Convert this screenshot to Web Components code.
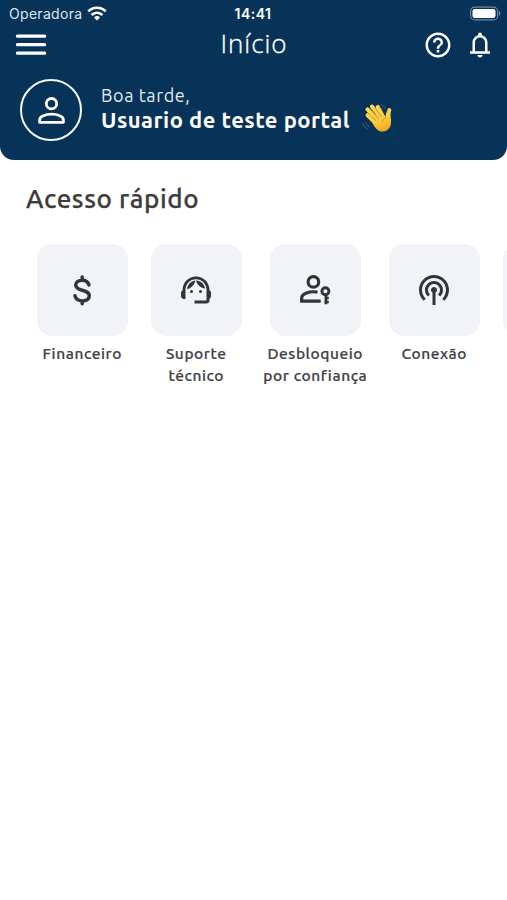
<!DOCTYPE html>
<html lang="pt-BR">
<head>
<meta charset="utf-8">
<title>Início</title>
<style>
html,body{margin:0;height:100%;overflow:hidden;background:#fff}
body{font-family:Ubuntu,"Noto Sans","Open Sans",sans-serif}
</style>
</head>
<body>
<portal-app></portal-app>
<script>
const icons = {
  menu: ['0 0 30 22', '<path d="M1.4 2.2H28.6M1.4 10.7H28.6M1.4 19.2H28.6" fill="none" stroke="currentColor" stroke-width="3.2" stroke-linecap="round"/>'],
  wifi: ['0 0 20 15', '<g fill="none" stroke="currentColor" stroke-width="2.7"><path d="M1.3 5.4a12.2 12.2 0 0 1 17.4 0M4.6 9a7.6 7.6 0 0 1 10.8 0"/></g><path d="M10 14.5l-3-3a4.3 4.3 0 0 1 6 0z" fill="currentColor"/>'],
  battery: ['0 0 32 16', '<rect x="1.6" y="1.1" width="27" height="12.8" rx="4" fill="none" stroke="#70879f" stroke-width="1.1"/><rect x="3.5" y="2.9" width="23" height="9.2" rx="2.3" fill="#fff"/><path d="M29.9 5.1v4.8q1.5-.8 1.5-2.4t-1.5-2.4z" fill="#70879f"/>'],
  help: ['0 0 24 24', '<path fill="currentColor" d="M11 18h2v-2h-2v2zm1-16C6.48 2 2 6.48 2 12s4.48 10 10 10 10-4.48 10-10S17.52 2 12 2zm0 18c-4.41 0-8-3.59-8-8s3.59-8 8-8 8 3.59 8 8-3.59 8-8 8zm0-14c-2.21 0-4 1.79-4 4h2c0-1.1.9-2 2-2s2 .9 2 2c0 2-3 1.75-3 5h2c0-2.25 3-2.5 3-5 0-2.21-1.79-4-4-4z"/>'],
  bell: ['0 0 24 24', '<path fill="currentColor" d="M4 19v-2h2v-7c0-2.79 1.91-5.14 4.5-5.8v-.7c0-.83.67-1.5 1.5-1.5s1.5.67 1.5 1.5v.7C16.09 4.86 18 7.21 18 10v7h2v2H4zM12 22c-1.1 0-2-.9-2-2h4c0 1.1-.9 2-2 2zM8 17h8v-7c0-2.2-1.8-4-4-4s-4 1.8-4 4v7z"/>'],
  person: ['0 0 27 27', '<g fill="none" stroke="currentColor" stroke-width="2.8"><circle cx="13.5" cy="6.7" r="5.2"/><path d="M1.6 25.3v-2.4c0-3.6 6-5.7 11.9-5.7s11.9 2.1 11.9 5.7v2.4z" stroke-linejoin="round"/></g>'],
  money: ['0 0 36 36', '<path d="M25 12.9c-.9-2.7-3.2-4.6-6.8-4.6-3.8 0-6.5 1.8-6.5 4.8 0 3.2 2.9 4.2 6.5 5.1 4.2 1 7.1 2.2 7.1 5.5 0 3.2-2.9 5.2-6.9 5.2-3.9 0-6.700-2-7.500-5.200M18.200 5v3M18.200 29.300v2.400" fill="none" stroke="currentColor" stroke-width="3.5" stroke-linecap="round"/>'],
  agent: ['0 0 24 24', '<g fill="currentColor"><path d="M21 12.22C21 6.73 16.74 3 12 3c-4.69 0-9 3.65-9 9.28-.6.34-1 .98-1 1.72v2c0 1.1.9 2 2 2h1v-6.1c0-3.87 3.13-7 7-7s7 3.13 7 7V19h-8v2h8c1.1 0 2-.9 2-2v-1.22c.59-.31 1-.92 1-1.64v-2.3c0-.7-.41-1.31-1-1.62z"/><circle cx="9" cy="13" r="1"/><circle cx="15" cy="13" r="1"/><path d="M6.1 11.5C6.5 8.5 8.5 6 11.6 5.7 11 8.4 9 10.7 6.1 11.5zM12 5.7c3.3.1 5.5 2.3 6 5.3C15.3 10.8 12.9 8.9 12 5.7z"/></g>'],
  unlock: ['0 0 36 36', '<g fill="none" stroke="currentColor" stroke-width="3.2"><circle cx="16.4" cy="9.9" r="5.3"/><path d="M20.5 20.1C12.3 18.7 4.7 21.9 4.7 26v3.1h19"/><circle cx="28.4" cy="19.3" r="3.5" stroke-width="2.9"/><path d="M28.9 23v9.2M29 26h2.8M29 30h2.8" stroke-width="2.7"/></g>'],
  signal: ['0 0 24 24', '<path fill="currentColor" d="M14 12c0 .74-.4 1.38-1 1.72V22h-2v-8.28c-.6-.35-1-.98-1-1.72 0-1.1.9-2 2-2s2 .9 2 2zm-2-6c-3.31 0-6 2.69-6 6 0 1.74.75 3.31 1.94 4.4l1.42-1.42C8.53 14.25 8 13.19 8 12c0-2.21 1.79-4 4-4s4 1.79 4 4c0 1.19-.53 2.25-1.36 2.98l1.42 1.42C17.25 15.31 18 13.74 18 12c0-3.31-2.69-6-6-6zm0-4C6.48 2 2 6.48 2 12c0 2.85 1.2 5.41 3.11 7.24l1.42-1.42C4.98 16.36 4 14.29 4 12c0-4.41 3.59-8 8-8s8 3.59 8 8c0 2.29-.98 4.36-2.53 5.82l1.42 1.42C20.8 17.41 22 14.85 22 12c0-5.52-4.48-10-10-10z"/>'],
  wave: ['0 0 32 32', '<defs><linearGradient id="g" gradientUnits="userSpaceOnUse" x1="10" y1="2" x2="22" y2="31"><stop offset="0" stop-color="#ffe05a"/><stop offset=".65" stop-color="#fcc736"/><stop offset="1" stop-color="#ed9d24"/></linearGradient></defs><g stroke="url(#g)" stroke-linecap="round" stroke-width="4.2" fill="none"><path d="M5.8 12.6l9 9M5.7 6.6l12 12M10.3 3.7l10 12M16.3 4.1l6 11"/><path d="M26.2 18.5c-1-4 .1-6.5 2.1-11.2" stroke-width="4"/></g><path d="M9.5 17.5L19 9.5l5 5.2 5.7-5c-1 4 1.6 8.8-.5 14.3-2 5-7.6 7-12.2 4.3-3-2-5.5-5.6-7.5-10.8z" fill="url(#g)"/><g fill="none" stroke="#c9851f" stroke-width=".9" stroke-linecap="round"><path d="M6 10.2l8.5 8M8 6.2l9 10M13.3 4.8l6.9 9.7M20.8 20c.3-2.7 1.8-4 3.8-4.8"/></g><g fill="none" stroke="#3d566c" stroke-width="1.1" stroke-linecap="round"><path d="M20.2 1.8c2 .6 3.2 2.2 3.7 4.2M18.8 4.1c1.2.5 2 1.5 2.3 2.8M1 21c.5 2.7 2.2 4.6 4.8 5.5M4.1 20.5c.4 1.8 1.4 3 3 3.7"/></g>']
};

function define(name, css, html) {
  customElements.define(name, class extends HTMLElement {
    constructor() {
      super();
      this.attachShadow({mode: 'open'}).innerHTML = `<style>${css}</style>${html}`;
    }
  });
}

customElements.define('ui-icon', class extends HTMLElement {
  connectedCallback() {
    const [box, body] = icons[this.getAttribute('name')];
    if (!this.shadowRoot) this.attachShadow({mode: 'open'});
    this.shadowRoot.innerHTML = `<style>:host{display:block;flex:none}svg{display:block;width:100%;height:100%;overflow:visible}</style><svg viewBox="${box}" aria-hidden="true">${body}</svg>`;
  }
});

define('status-bar', `
  :host{display:grid;grid-template-columns:1fr auto 1fr;align-items:center;height:27px;padding:0 6px 0 9px;font-family:Inter,sans-serif;font-size:14px;color:#fff}
  .carrier{display:flex;align-items:center;gap:5px;color:#dbe5ee;letter-spacing:.3px}
  .wifi{width:20px;height:15px;color:#fff;margin-top:-1px}
  .time{font-weight:600;letter-spacing:.5px;margin-right:4px}
  .battery{width:32px;height:16px;justify-self:end}
`, `<div class="carrier"><span>Operadora</span><ui-icon class="wifi" name="wifi"></ui-icon></div><span class="time">14:41</span><ui-icon class="battery" name="battery"></ui-icon>`);

define('nav-bar', `
  :host{display:grid;grid-template-columns:1fr auto 1fr;align-items:center;height:36px;padding:0 12px 0 16px;color:#fff}
  .menu{width:30px;height:22px}
  .title{font:300 26px/36px "Open Sans","Noto Sans",sans-serif;letter-spacing:.95px;-webkit-text-stroke:.35px currentColor;margin:-5px 3px 0 0}
  .actions{display:flex;justify-content:flex-end;align-items:center;gap:12px}
  .actions ui-icon{width:30px;height:30px}
`, `<ui-icon class="menu" name="menu"></ui-icon><span class="title"><slot></slot></span><div class="actions"><ui-icon name="help"></ui-icon><ui-icon name="bell"></ui-icon></div>`);

define('user-greeting', `
  :host{display:flex;align-items:center;gap:19px;padding:16px 20px 0;color:#fff}
  .avatar{box-sizing:border-box;width:62px;height:62px;border:2px solid #f4f9fc;border-radius:50%;display:grid;place-items:center;flex:none}
  .avatar ui-icon{width:27px;height:27px}
  .text{margin-top:-5px}
  .hello{font-size:18px;line-height:24px;letter-spacing:.6px;color:#e3ebf2}
  .row{display:flex;align-items:center;gap:12px;height:26px}
  .name{font-size:22px;line-height:26px;font-weight:700;letter-spacing:.48px;white-space:nowrap}
  .wave{width:31px;height:31px;margin-top:-2px}
`, `<div class="avatar"><ui-icon name="person"></ui-icon></div><div class="text"><div class="hello">Boa tarde,</div><div class="row"><span class="name"><slot></slot></span><ui-icon class="wave" name="wave"></ui-icon></div></div>`);

define('app-header', `
  :host{display:block;box-sizing:border-box;height:160px;background:#083358;border-radius:0 0 14px 14px}
`, `<slot></slot>`);

customElements.define('quick-action', class extends HTMLElement {
  connectedCallback() {
    if (!this.shadowRoot) this.attachShadow({mode: 'open'});
    this.shadowRoot.innerHTML = `<style>
      :host{display:flex;flex-direction:column;align-items:center;flex:none;width:var(--w,91.5px)}
      .tile{width:91.5px;height:91.5px;border-radius:15px;background:#f1f3f6;display:grid;place-items:center;color:#333436}
      ui-icon{width:36px;height:36px}
      .label{margin-top:7.5px;font-size:15.5px;line-height:22px;font-weight:500;letter-spacing:.57px;-webkit-text-stroke:.2px currentColor;text-align:center;white-space:nowrap;color:#424244}
    </style><div class="tile">${this.hasAttribute('icon') ? `<ui-icon name="${this.getAttribute('icon')}"></ui-icon>` : ''}</div><div class="label"><slot></slot></div>`;
  }
});

define('quick-access', `
  :host{display:block;padding-top:21px}
  h2{margin:0 0 0 26px;font-size:26px;line-height:36px;font-weight:500;letter-spacing:.58px;-webkit-text-stroke:.25px currentColor;color:#3c3c3e}
  .list{display:flex;gap:22.5px;margin-top:27px;padding-left:36.5px;overflow:hidden}
`, `<h2>Acesso rápido</h2><div class="list"><slot></slot></div>`);

define('portal-app', `
  :host{display:flex;flex-direction:column;height:100%;background:#fff;overflow:hidden}
  .wide{--w:101.5px}
`, `<app-header><status-bar></status-bar><nav-bar>Início</nav-bar><user-greeting>Usuario de teste portal</user-greeting></app-header>
<quick-access>
  <quick-action icon="money">Financeiro</quick-action>
  <quick-action icon="agent">Suporte<br>técnico</quick-action>
  <quick-action class="wide" icon="unlock">Desbloqueio<br>por confiança</quick-action>
  <quick-action icon="signal">Conexão</quick-action>
  <quick-action></quick-action>
</quick-access>`);
</script>
</body>
</html>
